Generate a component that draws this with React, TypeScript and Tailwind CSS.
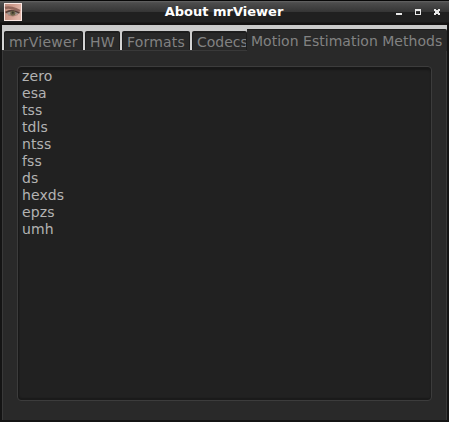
import React from "react";

const methods = ["zero", "esa", "tss", "tdls", "ntss", "fss", "ds", "hexds", "epzs", "umh"];

const tabs = [
  { label: "mrViewer", style: "w-[79px] tracking-[0.22px]" },
  { label: "HW", style: "w-[35px] tracking-[0.3px]" },
  { label: "Formats", style: "w-[68px] tracking-[0.2px]" },
  { label: "Codecs", style: "w-[55px]" },
];

function EyeIcon() {
  return (
    <svg className="ml-px mt-[2px] h-[18px] w-[18px] shrink-0" viewBox="0 0 18 18">
      <defs>
        <linearGradient id="skin" x1="0" y1="0" x2="1" y2="0.3">
          <stop offset="0" stopColor="#c08e80" />
          <stop offset="0.5" stopColor="#cf9c8d" />
          <stop offset="1" stopColor="#e2b6a9" />
        </linearGradient>
      </defs>
      <rect width="18" height="18" fill="#fbe9e5" />
      <rect x="1" y="1" width="16" height="16" fill="url(#skin)" />
      <path d="M1 5 Q4 4 8 5 T16 8" fill="none" stroke="#7d544a" strokeWidth="2.4" opacity=".75" />
      <path d="M2 10.5 Q8 5.5 15 10 Q9 14.5 2 10.5Z" fill="#98908c" />
      <path d="M1.5 9.5 Q8 5.5 15.5 10" fill="none" stroke="#58403a" strokeWidth="1.6" />
      <path d="M4 12 Q9 14.5 14 11.5" fill="none" stroke="#a07a6f" strokeWidth=".8" />
      <circle cx="8.8" cy="10.2" r="2.5" fill="#6b6246" />
      <circle cx="8.8" cy="9.7" r="1.1" fill="#39352c" />
    </svg>
  );
}

function TitleBar() {
  return (
    <header className="flex h-[25px] items-start border-t border-[#080808] bg-[linear-gradient(to_bottom,#686868_0px,#555_1px,#4c4c4c_2px,#353535_11px,#202020_11px,#202020_21px,#141212_22px,#141212_24px)] px-[3px]">
      <EyeIcon />
      <h1 className="h-[21px] flex-1 whitespace-nowrap pl-[31px] text-center text-[13px] font-bold leading-[21px] text-white">
        About mrViewer
      </h1>
      <svg className="h-[24px] w-[51px] shrink-0" viewBox="395 1 51 24" shapeRendering="crispEdges">
        <path d="M396 13h6v2h-6z" fill="#e8e8e8" />
        <path d="M415 9h6v6h-6z M416 11v3h4v-3z" fill="#e8e8e8" fillRule="evenodd" />
        <path d="M434 9h2v1h2v-1h2v2h-1v2h1v2h-2v-1h-2v1h-2v-2h1v-2h-1z" fill="#e8e8e8" />
      </svg>
    </header>
  );
}

export default function App() {
  return (
    <div className="flex h-[422px] w-[449px] flex-col overflow-hidden bg-[#141414] font-['DejaVu_Sans',sans-serif]">
      <TitleBar />
      <main className="mx-[2px] flex h-[395px] flex-col bg-[#292929]">
        <nav className="flex h-[26px] shrink-0 items-end border-b border-[#393939] bg-[linear-gradient(to_bottom,#c8c8c8,#d8d8d8)] pl-[2px] text-[14px] text-[#828282]">
          <div className="flex w-[243px] gap-[2px]">
            {tabs.map((tab) => (
              <div
                key={tab.label}
                className={`${tab.style} h-[19px] shrink-0 overflow-hidden whitespace-nowrap rounded-t-[2px] border-x border-t-2 border-[#1d1d1d] bg-[#282828] pl-[4px] leading-[19px]`}
              >
                {tab.label}
              </div>
            ))}
          </div>
          <div className="-mb-px h-[22px] flex-1 whitespace-nowrap rounded-tr-[2px] border-t border-[#1c1c1c] bg-[#292929] pl-[4px] leading-[23px] tracking-[0.02px]">
            Motion Estimation Methods
          </div>
        </nav>
        <section className="flex-1 border-x-[1px] border-[#393939] px-[14px] pt-[15px]">
          <ul className="h-[335px] w-[415px] rounded-[4px] border border-[#3c3c3c] bg-[#212121] pl-[4px] pt-px text-[14px] leading-[17px] tracking-[0.1px] text-[#b3b3b3] shadow-[inset_0_3px_2px_#181818,inset_1px_-2px_1px_#1a1a1a]">
            {methods.map((method) => (
              <li key={method}>{method}</li>
            ))}
          </ul>
        </section>
      </main>
    </div>
  );
}
